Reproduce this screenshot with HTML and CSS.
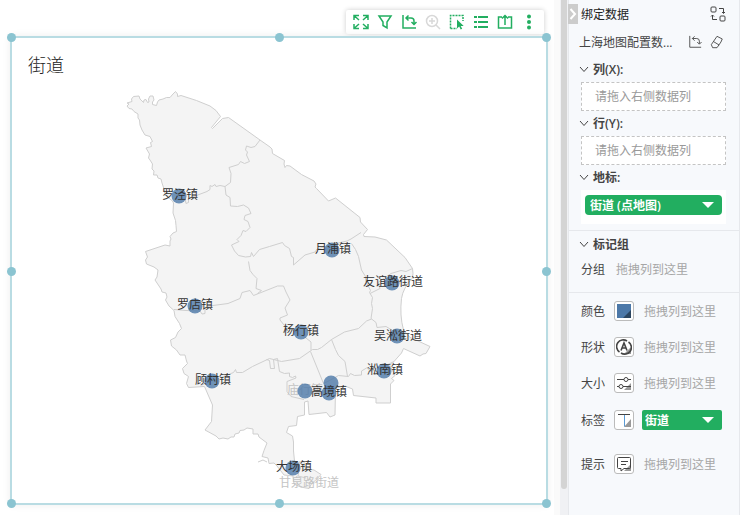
FILE: index.html
```html
<!DOCTYPE html>
<html lang="zh-CN">
  <head>
    <meta charset="UTF-8" />
    <meta name="viewport" content="width=device-width, initial-scale=1.0" />
    <title>街道</title>
    <link rel="stylesheet" href="styles.css">
  </head>

  <body>
    <main class="canvas">
      <div class="toolbar">
        <button type="button" aria-label="全屏">
          <svg viewBox="0 0 16 16"><path d="M1 6V1.500h5M1.500 2l4.500 4M10 1.500h5V6M14.500 2L10 6M1 10v4.500h5M1.500 14L6 10M15 10v4.500h-5M14.500 14L10 10" /></svg>
        </button>
        <button type="button" aria-label="筛选">
          <svg viewBox="0 0 16 16"><path d="M2 2h12L10 8v6L6 11.500V8z" /></svg>
        </button>
        <button type="button" aria-label="转置">
          <svg viewBox="0 0 16 16"><path d="M2 1v13h13M5 4h5q3 0 3 3v3M7.500 1.500L5 4l2.500 2.500M10.500 8L13 10.500 15.500 8" /></svg>
        </button>
        <button type="button" aria-label="放大" disabled>
          <svg viewBox="0 0 16 16"><circle cx="7" cy="7" r="5.500" /><path d="M4 7h6M7 4v6M11 11l4 4" /></svg>
        </button>
        <button type="button" aria-label="框选">
          <svg viewBox="0 0 16 16"><path d="M1.500 14.500V1.500H14V7M1.500 14.500H8" stroke-dasharray="2 1" /><path class="solid" d="M8 5.500v9l2.200-2 1.500 3 1.500-.8-1.500-2.700h3z" /></svg>
        </button>
        <button type="button" aria-label="明细">
          <svg viewBox="0 0 16 16"><path d="M1 3h3M5 3h10M1 8h3M5 8h10M1 13h3M5 13h10" stroke-width="2" /></svg>
        </button>
        <button type="button" aria-label="导出">
          <svg viewBox="0 0 16 16"><path d="M5 3H1.500v11h13V3H11M8 11V2M5 4.500L8 1.500l3 3" /></svg>
        </button>
        <button type="button" aria-label="更多">
          <svg viewBox="0 0 16 16"><g class="solid"><circle cx="8" cy="2.500" r="2" /><circle cx="8" cy="8" r="2" /><circle cx="8" cy="13.500" r="2" /></g></svg>
        </button>
      </div>

      <section class="widget">
        <i class="handle top left"></i>
        <i class="handle top center"></i>
        <i class="handle top right"></i>
        <i class="handle middle left"></i>
        <i class="handle middle right"></i>
        <i class="handle bottom left"></i>
        <i class="handle bottom center"></i>
        <i class="handle bottom right"></i>
        <h1>街道</h1>
        <svg class="map" viewBox="12 84 534 419">
          <path class="area" d="M127 106L129 104L127 103L132 101.500L131.500 99L133.500 96.500L139 96L140 99L143.500 102.500L144 100L146 99.500L147.500 102.500L149 102L148.500 99L150 96H153L154 100L152.500 102V104.500L156.500 105.500L157.500 102L159 100L163 99L166.500 97.500L170 97.500L173 94L175.500 91.500L177.500 94V96.500L181 95.500L196.500 100.500L210 106L216 110.500L220.500 116.500L211.500 127.500L212.500 128.500L222.500 118.500L228.500 117.500L260 140l10 7 2 2 .5 4.500 12 7-.5 3.500 1 3.500 1.500-2 3.500.5 11.500 8.500 12.500 6.500 2 3-1 3 1.500 1.500 12 12.500 7-3L360 217.500l.5 4.500 7 7.500-4 5 .5 2 11 .5 11.500 3L405 257.500l7.500 11 .5 5-.5 4.500Q403 288 401.500 298.500q-2 17 2 31.500l6.500 7.500 7 3 13 6-4 7-3 .5-3 2-16.500-7.500-2 4.500-7.500 8.500-4 4 5 10-3.500 3 2.500 2-3.500 3.500v19H376v-5l-22.500-2.500-1-6.500-7.500-3-9.500 2-.5 27-5 2-3.500-4.500-17.500 2-1-13.500-3.500 1v13l-7 1.500-1 9-8 1-2 6 6 3.500 1 6v9l1 10 4 1.500 5.500-1 1 7 9 1.500 7 4.500-5.500 6-3.500 2.500-3 5.500-8.500-1.500-6.500-3-1-8-9-1-7-9-3-3-5 .5-1-5.500-6-1.500 2-6 3-7.500-8-6-1-3h-5v-5l-6-1-3 2-4 .5-1 2.500-4 1-1 3h-3l-3 2-5-1-4 1-3-3L205 430L211.500 421.500L212.500 405L204.500 386.500L188.500 387.500L186.500 383.500L188.500 376.500L184 373.500L182.500 368.500L187.500 363.500L186.500 361L185 355H180L176.500 350L171.500 346L170.500 340L175.500 337.500L178 332L181.500 328.500L179.500 323.500L175 316.500L174 310.500L169 306L165.500 300L167 297L166 293L162 292L161 289L155 280L157 277L158 270L154 267L146.500 264L145.500 260L147.500 257L145.500 251.500L165 245L170 246V241L171 239L170 236.500L173 233L176.500 231.500L176 225.500L175.500 220.500L173 213L173.500 203L172.500 201L165 195L164 189L162 183L161 179L158 178L157 175L153.500 175L154 171L152 169L152.500 164L150 160L148.500 158L149.500 154L146 148L151.500 146.500L150.500 142.500L152.500 141.500L150 136.500L145 135L142 130L140 125L139.500 120L138 118V114L134 111.500L132 109L129 108.500z" />
          <path class="border" d="M260 140l-5 6.500-4 1-4.500-1.500-1 4 2 2-1 3 3 6.500-5 2-4-2-2 3-9.500 3 2 6-.5 9-5.500 4-5-1-4 1-1-2-3 2-2-1v4l-3 2-18.500 7v4l-2.500 1-1-5-7 1M225 186.500l1 8.500 4 2.500.5 8.500 7 .5 6-1.500 5 3 2.500 5.500-6 2-1 4 4 2 2 6-4 4-3-1-2 5-4 4 2 2-7.500 3.500 3 6 4 4.500 7 1.500 5-.5 1-4 2 4 6-7 10-3 13-4 2 3 5 3 2 8 2 1v7.500l11.500-10 10-3 2-3 17-5 13-3 4-2 10-6.500M351.500 243.500l4 6 3 7 3 13.500 4 6.500 0 4 5 10-1 2 3 5-1 6 1 5-1.500 10 5 4 1 5 9-1 10 6 8 1M370 293.500l10-5-2-6 13-9 10-3 5 1 6.500-3M371.500 319l-5 2-8 7.500-14 3.500-13 7.500-10 8-4 2h-5l-13 9-18 3-12-3-17 8-10 6h-6l-1-3-2 3-5 2-28 11M311 350v-8l-5-4-22-13-4-5 0-2 7.500-3-2.500-7 5-8-4-8-2.500-6h-6L253.500 295.500l-3.500-5-8 2-2 6-12 5-15 2-5 1-3 2v5l-3 .5-2-3-14-.5-12-1M248.500 261.500l1.500 9 3 4 4 4-1 10 5.500 2-4 3M331.500 339.500l4 10 3 6 6.500 6 2.500 15M310.500 351.500l13 32 6-3 9-5 10 1 2-3 4 2 7-.5v-4l5-3 5 3 4.500-.5 8-4 10-5M266.500 359.500l3 1 1 8h4l-1-9 4-1 2 13 5 2 5-.5v3.500l3 1 3-1.500.5 2-9 3.500v10l4 5 13 3M258 462l5-2 4 2M292 475l-5-3M300 461l-2 15 8 2" />
          <g class="muted">
            <text x="305" y="394">庙行镇</text>
            <text x="309" y="487">甘泉路街道</text>
          </g>
          <g class="points">
            <circle cx="179" cy="196" r="7.500" />
            <circle cx="332" cy="250" r="7.500" />
            <circle cx="392" cy="283" r="7.500" />
            <circle cx="195" cy="306" r="7.500" />
            <circle cx="301" cy="332" r="7.500" />
            <circle cx="397" cy="336" r="7.500" />
            <circle cx="384" cy="371" r="7.500" />
            <circle cx="212" cy="381" r="7.500" />
            <circle cx="331" cy="383" r="7.500" />
            <circle cx="305" cy="391" r="7.500" />
            <circle cx="329" cy="393" r="7.500" />
            <circle cx="293" cy="468" r="7.500" />
          </g>
          <g class="names">
            <text x="180" y="199">罗泾镇</text>
            <text x="333" y="253">月浦镇</text>
            <text x="393" y="286">友谊路街道</text>
            <text x="195" y="309">罗店镇</text>
            <text x="301" y="335">杨行镇</text>
            <text x="398" y="340">吴淞街道</text>
            <text x="385" y="374">淞南镇</text>
            <text x="213" y="384">顾村镇</text>
            <text x="329" y="396">高境镇</text>
            <text x="294" y="471">大场镇</text>
          </g>
        </svg>
      </section>
    </main>

    <div class="scrollbar"><div class="thumb"></div></div>

    <aside class="panel">
      <button type="button" class="collapse" aria-label="收起">
        <svg viewBox="0 0 10 20"><path d="M2.500 5l4.500 5-4.500 5" /></svg>
      </button>
      <header class="row">
        <h2>绑定数据</h2>
        <button type="button" class="tool" aria-label="切换">
          <svg viewBox="0 0 16 16"><rect x="1" y="1" width="5" height="5" rx="1" /><rect x="10" y="10" width="5" height="5" rx="1" /><path d="M9 2.500h4.500V7M12 6l1.500 1.500L15 6M7 13.500H2.500V9M1 10.500L2.500 9 4 10.500" /></svg>
        </button>
      </header>
      <div class="row source">
        <span class="name">上海地图配置数...</span>
        <button type="button" class="tool small" aria-label="转置">
          <svg viewBox="0 0 16 16"><path d="M2 1v13h13M5 4h5q3 0 3 3v3M7.500 1.500L5 4l2.500 2.500M10.500 8L13 10.500 15.500 8" /></svg>
        </button>
        <button type="button" class="tool small" aria-label="清除">
          <svg viewBox="0 0 16 16"><path d="M8 1.500l6 3-1.500 3.500-4.500 6.500-5 0-1.500-3.500zM4 7.500l6.500 4" /></svg>
        </button>
      </div>

      <h3><svg viewBox="0 0 10 10"><path d="M1 3l4 4.500L9 3" /></svg>列(X):</h3>
      <div class="drop">请拖入右侧数据列</div>
      <h3><svg viewBox="0 0 10 10"><path d="M1 3l4 4.500L9 3" /></svg>行(Y):</h3>
      <div class="drop">请拖入右侧数据列</div>
      <h3><svg viewBox="0 0 10 10"><path d="M1 3l4 4.500L9 3" /></svg>地标:</h3>
      <div class="well">
        <div class="pill">
          <select aria-label="地标"><option>街道 (点地图)</option></select>
          <svg viewBox="0 0 12 6"><path d="M0 0h12L6 6z" /></svg>
        </div>
      </div>

      <section class="group">
        <h3><svg viewBox="0 0 10 10"><path d="M1 3l4 4.500L9 3" /></svg>标记组</h3>
        <div class="split"><span>分组</span><span class="hint">拖拽列到这里</span></div>
      </section>

      <section class="marks">
        <div class="mark">
          <span>颜色</span>
          <button type="button" aria-label="颜色">
            <svg viewBox="0 0 16 16"><path fill="#4c78a8" d="M1 1h14v14H1z" /><path fill="#2b4560" d="M15 7v8H7z" /></svg>
          </button>
          <span class="hint">拖拽列到这里</span>
        </div>
        <div class="mark">
          <span>形状</span>
          <button type="button" aria-label="形状">
            <svg viewBox="0 0 16 16"><path class="corner" d="M15 8v7H8z" /><g stroke-width="1.600"><path d="M3.500 13A6.500 6.500 0 0 1 11 2M12.500 3A6.500 6.500 0 0 1 5 14" /><path d="M5 11.500L8 4l3 7.500M6 9h4" /></g></svg>
          </button>
          <span class="hint">拖拽列到这里</span>
        </div>
        <div class="mark">
          <span>大小</span>
          <button type="button" aria-label="大小">
            <svg viewBox="0 0 16 16"><path class="corner" d="M15 8v7H8z" /><path d="M1 4.500h7M12 4.500h3M1 11.500h2M7 11.500h8" /><circle cx="10" cy="4.500" r="2" /><circle cx="5" cy="11.500" r="2" /></svg>
          </button>
          <span class="hint">拖拽列到这里</span>
        </div>
        <div class="mark tag">
          <span>标签</span>
          <button type="button" aria-label="标签">
            <svg viewBox="0 0 16 16"><path class="corner" d="M15 7v8H8z" /><path d="M2 2.500h12" /><path stroke="#5b9bd5" d="M8.500 3v11.500" /></svg>
          </button>
          <div class="pill">
            <select aria-label="标签列"><option>街道</option></select>
            <svg viewBox="0 0 12 6"><path d="M0 0h12L6 6z" /></svg>
          </div>
        </div>
        <div class="mark tip">
          <span>提示</span>
          <button type="button" aria-label="提示">
            <svg viewBox="0 0 16 16"><path class="corner" d="M15 8v7H8z" /><path d="M2.500 1.500h11q1 0 1 1v9q0 1-1 1H8l-3 2.500v-2.500H2.500q-1 0-1-1v-9q0-1 1-1zM5 5.500h7M5 8.500h5" /></svg>
          </button>
          <span class="hint">拖拽列到这里</span>
        </div>
      </section>
    </aside>
  </body>
</html>
```
FILE: styles.css
```css
* {
  box-sizing: border-box;
}

body {
  margin: 0;
  min-height: 100vh;
  display: flex;
  font-family: "Open Sans", "Noto Sans CJK SC", sans-serif;
  font-size: 12px;
  color: #444;
  background-color: #fff;
}

svg {
  display: block;
  fill: none;
  stroke: currentColor;
}

h1,
h2,
h3 {
  margin: 0;
  font-size: 12px;
}

button {
  padding: 0;
  border: none;
  background: none;
  color: inherit;
  cursor: pointer;
}

.canvas {
  flex: 1;
  min-width: 0;
  display: flex;
  flex-direction: column;
  padding: 10px 6px 10px 10px;
  border-right: 6px solid #fafafa;
}

.toolbar {
  align-self: flex-end;
  display: flex;
  gap: 8px;
  height: 24px;
  margin: 0 4px 2px 0;
  padding: 4px 7px;
  border-radius: 2px;
  background-color: #fff;
  box-shadow: 0 0 5px rgba(0, 0, 0, 0.2);
  color: #22ae60;
}

.toolbar svg {
  width: 16px;
  height: 16px;
  stroke-width: 1.5;
}

.toolbar button:disabled {
  color: #d8d8d8;
}

.toolbar .solid {
  fill: currentColor;
  stroke: none;
}

/* selected chart */
.widget {
  flex: 1;
  position: relative;
  display: flex;
  flex-direction: column;
  border: 2px solid #b9dce3;
  box-shadow: 0 0 8px #eee;
}

.widget h1 {
  padding: 14px 16px 6px;
  font-size: 18px;
  line-height: 26px;
  font-weight: 300;
  color: #222;
}

.handle {
  position: absolute;
  width: 9px;
  height: 9px;
  border-radius: 50%;
  background-color: #8bc4d1;
}

.top {
  top: -5px;
}

.middle {
  top: calc(50% - 4px);
}

.bottom {
  bottom: -5px;
}

.left {
  left: -5px;
}

.center {
  left: calc(50% - 4px);
}

.right {
  right: -5px;
}

.map {
  flex: 1;
  width: 100%;
  min-height: 0;
  stroke: none;
}

.area {
  fill: #f4f4f4;
  stroke: #cfcfcf;
}

.border {
  stroke: #cfcfcf;
}

.map text {
  font-size: 12px;
  text-anchor: middle;
}

.muted {
  fill: #c4c4c4;
}

.points {
  fill: #4c78a8;
  fill-opacity: 0.8;
}

.names {
  fill: #333;
}

.scrollbar {
  width: 8px;
  padding: 0 1px;
  background-color: #f0f1f4;
}

.thumb {
  height: 95%;
  border-radius: 0 0 3px 3px;
  background-color: #d4d4d4;
}

/* data binding panel */
.panel {
  position: relative;
  width: 172px;
  padding: 0 13px 0 12px;
  border-left: 1px solid #e6e8ec;
  border-right: 1px solid #e6e8ec;
  background-color: #f7f9fc;
}

.collapse {
  position: absolute;
  top: 4px;
  left: -1px;
  width: 10px;
  height: 20px;
  background-color: #ccc;
  color: #fff;
}

.collapse svg {
  width: 10px;
  height: 20px;
  stroke-width: 2;
}

.row {
  display: flex;
  align-items: center;
  height: 28px;
}

.row h2,
.row .name {
  flex: 1;
  font-weight: 400;
  white-space: nowrap;
}

.row h2 {
  color: #222;
}

.tool svg {
  width: 16px;
  height: 16px;
}

.small svg {
  width: 14px;
  height: 14px;
}

.source {
  gap: 8px;
  padding-right: 2px;
  margin-left: -2px;
}

.panel h3 {
  display: flex;
  align-items: center;
  gap: 4px;
  height: 26px;
  margin-left: -2px;
  font-weight: 600;
}

.panel h3 svg {
  width: 10px;
  height: 10px;
}

.drop {
  height: 29px;
  margin-bottom: -1px;
  padding-left: 13px;
  border: 1px dashed #c4c4c4;
  background-color: #fff;
  line-height: 27px;
  color: #999;
}

.well {
  height: 34px;
  padding: 5px 4px 9px;
  background-color: #fff;
}

.pill {
  flex: 1;
  position: relative;
  height: 20px;
}

.pill select {
  width: 100%;
  height: 20px;
  padding: 0 20px 0 5px;
  border: none;
  border-radius: 4px;
  appearance: none;
  background-color: #22ae60;
  color: #fff;
  font-family: inherit;
  font-size: 12px;
  font-weight: 600;
}

.pill svg {
  position: absolute;
  top: 7px;
  right: 8px;
  width: 12px;
  height: 6px;
  fill: #fff;
  stroke: none;
  pointer-events: none;
}

.group {
  margin: 6px -13px 0 -12px;
  padding: 0 13px 11px 12px;
  border: solid #e6e8ec;
  border-width: 1px 0;
}

.split {
  display: flex;
  align-items: center;
  gap: 11px;
  height: 24px;
}

.hint {
  color: #a6a6a6;
}

.mark {
  display: flex;
  align-items: center;
  height: 36px;
}

.mark button {
  width: 20px;
  height: 20px;
  margin: 0 10px 0 9px;
  padding: 1px;
  border: 1px solid #bbb;
  border-radius: 3px;
  background-color: #fff;
}

.mark button svg {
  width: 16px;
  height: 16px;
}

.mark button path[fill] {
  stroke: none;
}

.corner {
  fill: #999;
  stroke: none;
}

.tag {
  height: 38px;
}

.tag button {
  margin-right: 8px;
}

.tag .pill {
  margin-right: 4px;
}

.tag .pill select {
  padding-left: 3px;
  border-radius: 2px;
}

.tip {
  height: 50px;
}
```
